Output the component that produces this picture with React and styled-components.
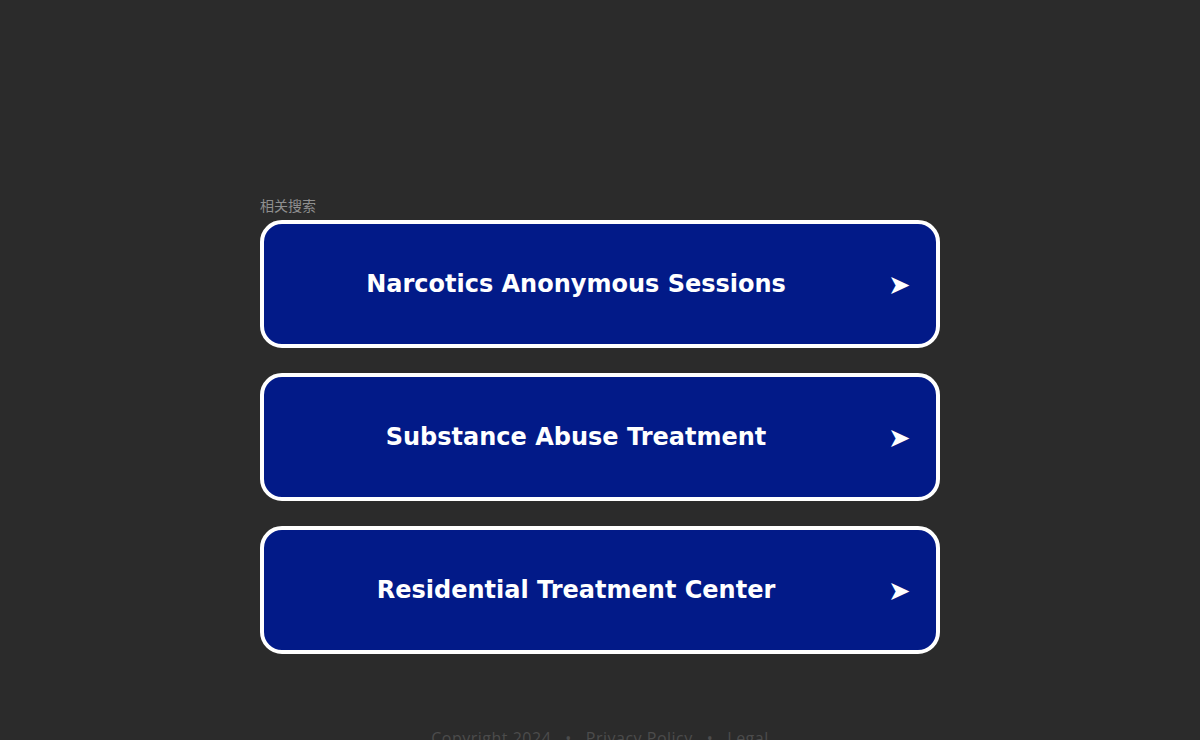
import styled, { createGlobalStyle } from 'styled-components';

const GlobalStyle = createGlobalStyle`
  html, body {
    margin: 0;
    padding: 0;
    background-color: #2b2b2b;
  }
`;

const links = [
  'Narcotics Anonymous Sessions',
  'Substance Abuse Treatment',
  'Residential Treatment Center',
];

const App = () => {
  return (
    <Page>
      <GlobalStyle />
      <Content>
        <Label>相关搜索</Label>
        <LinkList>
          {links.map((title) => (
            <LinkCard key={title} href="#">
              <LinkText>{title}</LinkText>
              <Arrow>➤</Arrow>
            </LinkCard>
          ))}
        </LinkList>
      </Content>
      <Footer>
        <span>Copyright 2024</span>
        <Dot>•</Dot>
        <FooterLink href="#">Privacy Policy</FooterLink>
        <Dot>•</Dot>
        <FooterLink href="#">Legal</FooterLink>
      </Footer>
    </Page>
  );
};

const Page = styled.div`
  min-height: 740px;
  display: flex;
  flex-direction: column;
  align-items: center;
  padding-top: 195px;
  box-sizing: border-box;
`;

const Content = styled.div`
  width: 680px;
`;

const Label = styled.div`
  font-family: 'Noto Sans CJK SC', sans-serif;
  font-size: 14px;
  line-height: 21px;
  color: #8f8f8f;
  margin-bottom: 4px;
`;

const LinkList = styled.div`
  display: flex;
  flex-direction: column;
  gap: 25px;
`;

const LinkCard = styled.a`
  display: flex;
  align-items: center;
  height: 128px;
  box-sizing: border-box;
  border: 4px solid #ffffff;
  border-radius: 22px;
  background-color: #021a88;
  padding-right: 28px;
  text-decoration: none;
  color: #ffffff;
`;

const LinkText = styled.span`
  flex: 1;
  text-align: center;
  font-family: 'DejaVu Sans', Verdana, sans-serif;
  font-weight: bold;
  font-size: 24px;
  letter-spacing: 0;
`;

const Arrow = styled.span`
  width: 20px;
  font-family: 'DejaVu Sans', sans-serif;
  font-size: 27px;
  line-height: 1;
  text-align: center;
`;

const Footer = styled.div`
  margin-top: 73px;
  display: flex;
  gap: 14px;
  font-family: 'Open Sans', sans-serif;
  font-size: 16px;
  letter-spacing: 0.5px;
  color: #4c4c4c;
`;

const Dot = styled.span`
  color: #4c4c4c;
`;

const FooterLink = styled.a`
  color: #4c4c4c;
  text-decoration: none;
`;

export default App;
